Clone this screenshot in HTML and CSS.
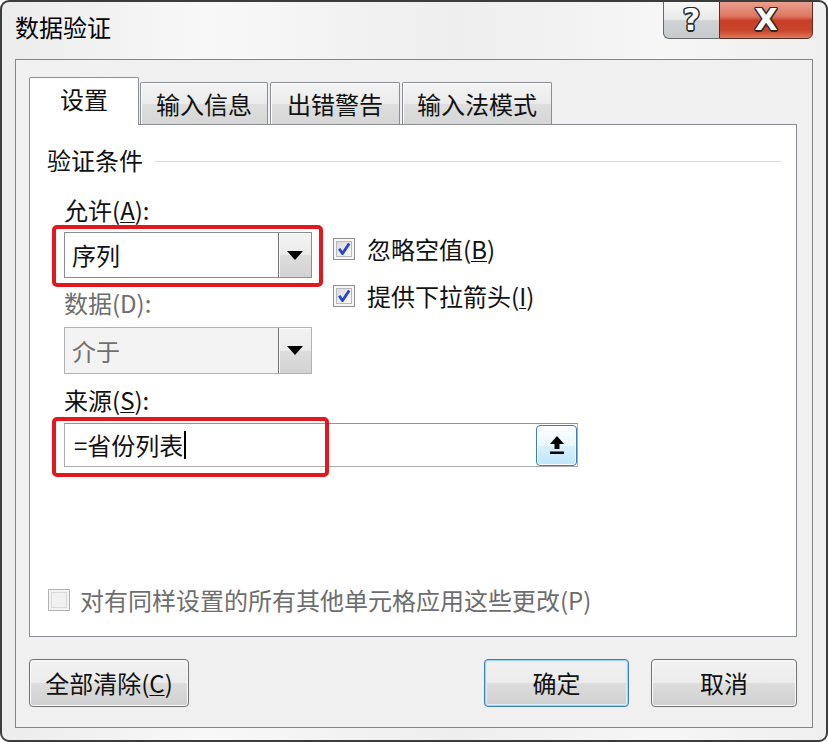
FILE: index.html
```html
<!DOCTYPE html>
<html lang="zh-CN">
<head>
<meta charset="utf-8">
<title>数据验证</title>
<link rel="stylesheet" href="styles.css">
</head>
<body>
<div class="window">
  <div class="titlebar">
    <div class="title">数据验证</div>
    <div class="caption-buttons">
      <div class="cap-btn help">?</div>
      <div class="cap-btn close">X</div>
    </div>
  </div>
  <div class="client">
    <div class="tabs">
      <div class="tab active">设置</div>
      <div class="tab">输入信息</div>
      <div class="tab">出错警告</div>
      <div class="tab">输入法模式</div>
    </div>
    <div class="panel">
      <div class="group-head">
        <span class="group-title">验证条件</span>
        <div class="group-line"></div>
      </div>
      <div class="group-body">
        <div class="top-row">
          <div class="left-col">
            <div class="label">允许(<u>A</u>):</div>
            <div class="combo">
              <div class="combo-text">序列</div>
              <div class="combo-btn"><svg width="16" height="9" viewBox="0 0 16 9"><path d="M0 0 H16 L8 9 Z" fill="#000"/></svg></div>
            </div>
            <div class="label label-gap disabled">数据(D):</div>
            <div class="combo combo-disabled">
              <div class="combo-text">介于</div>
              <div class="combo-btn"><svg width="16" height="9" viewBox="0 0 16 9"><path d="M0 0 H16 L8 9 Z" fill="#000"/></svg></div>
            </div>
          </div>
          <div class="right-col">
            <div class="check">
              <svg class="box" width="22" height="22" viewBox="0 0 22 22">
                <defs><linearGradient id="cbg" x1="0" y1="0" x2="1" y2="1"><stop offset="0" stop-color="#d6d8da"/><stop offset="1" stop-color="#fbfbfb"/></linearGradient></defs>
                <rect x="0.5" y="0.5" width="21" height="21" fill="#f6f6f6" stroke="#8f8f8f"/>
                <rect x="3.5" y="3.5" width="15" height="15" fill="url(#cbg)" stroke="#b9b9b9"/>
                <path d="M6.2 10.8 L9.6 15.6 L16.2 5.4" fill="none" stroke="#2844c8" stroke-width="2.8" stroke-linejoin="round"/>
              </svg>
              <span>忽略空值(<u>B</u>)</span>
            </div>
            <div class="check">
              <svg class="box" width="22" height="22" viewBox="0 0 22 22">
                <rect x="0.5" y="0.5" width="21" height="21" fill="#f6f6f6" stroke="#8f8f8f"/>
                <rect x="3.5" y="3.5" width="15" height="15" fill="url(#cbg)" stroke="#b9b9b9"/>
                <path d="M6.2 10.8 L9.6 15.6 L16.2 5.4" fill="none" stroke="#2844c8" stroke-width="2.8" stroke-linejoin="round"/>
              </svg>
              <span>提供下拉箭头(<u>I</u>)</span>
            </div>
          </div>
        </div>
        <div class="label label-src">来源(<u>S</u>):</div>
        <div class="source">
          <div class="source-text">=省份列表<span class="caret"></span></div>
          <div class="ref-btn">
            <svg width="18" height="20" viewBox="0 0 18 20">
              <path d="M9 1 L16 9 H11.5 V14 H6.5 V9 H2 Z" fill="#000"/>
              <rect x="2" y="16.5" width="14" height="2.5" fill="#000"/>
            </svg>
          </div>
        </div>
      </div>
      <div class="check apply-all">
        <svg class="box" width="22" height="22" viewBox="0 0 22 22">
          <rect x="0.5" y="0.5" width="21" height="21" fill="#f4f4f4" stroke="#b1b1b1"/>
          <rect x="3.5" y="3.5" width="15" height="15" fill="#f1f1f1" stroke="#dadada"/>
        </svg>
        <span>对有同样设置的所有其他单元格应用这些更改(P)</span>
      </div>
      <div class="mark mark-allow"></div>
      <div class="mark mark-source"></div>
    </div>
    <div class="footer">
      <div class="btn btn-clear">全部清除(<u>C</u>)</div>
      <div class="btn btn-ok">确定</div>
      <div class="btn btn-cancel">取消</div>
    </div>
  </div>
</div>
</body>
</html>
```
FILE: styles.css
```css
* { box-sizing: border-box; }
html, body { margin: 0; padding: 0; }
body {
  width: 828px;
  height: 742px;
  background: #ffffff;
  font-family: "Noto Sans CJK SC", "Noto Sans", sans-serif;
  font-size: 24px;
  color: #111;
}
u { text-decoration: underline; text-underline-offset: 2px; text-decoration-thickness: 1px; }

.window {
  width: 828px;
  height: 742px;
  border: 2px solid #3c3c3c;
  border-radius: 9px;
  background: linear-gradient(to right, #ececec 0%, #f8f8f8 25%, #eeeeee 55%, #f6f6f6 80%, #efefef 100%);
  display: flex;
  flex-direction: column;
  overflow: hidden;
}

.titlebar {
  height: 57px;
  display: flex;
  padding-left: 13px;
}
.title {
  padding-top: 10px;
  line-height: 30px;
  font-size: 24px;
  color: #000;
}
.caption-buttons {
  margin-left: auto;
  margin-right: 13px;
  margin-top: -1px;
  display: flex;
  align-self: flex-start;
}
.cap-btn {
  height: 38px;
  display: flex;
  align-items: center;
  justify-content: center;
  color: #fff;
  font-family: "DejaVu Sans", sans-serif;
  font-weight: bold;
  line-height: 1;
  text-shadow: 1.5px 0 0 #2a2a2a, -1.5px 0 0 #2a2a2a, 0 1.5px 0 #2a2a2a, 0 -1.5px 0 #2a2a2a, 1px 1px 0 #2a2a2a, -1px -1px 0 #2a2a2a, 1px -1px 0 #2a2a2a, -1px 1px 0 #2a2a2a;
}
.help {
  width: 56px;
  font-size: 30px;
  border: 1px solid #6a6a6a;
  border-right: none;
  border-radius: 0 0 0 6px;
  background: linear-gradient(#f7f7f7 0%, #e9e9e9 48%, #cfd3d6 52%, #c6cbce 100%);
}
.close {
  width: 94px;
  font-size: 30px;
  border: 1px solid #5b2c22;
  border-radius: 0 0 6px 0;
  background: linear-gradient(#eaa08f 0%, #de7560 40%, #c83e26 52%, #c9452c 80%, #df7a5e 100%);
}

.client {
  margin: 0 13px 12px 13px;
  height: 669px;
  border: 1px solid #858585;
  background: #f0f0f0;
  padding: 17px 15px 0 13px;
  display: flex;
  flex-direction: column;
}

.tabs {
  height: 47px;
  display: flex;
  align-items: flex-end;
  gap: 1px;
  position: relative;
  z-index: 2;
}
.tab {
  height: 42px;
  border: 1px solid #8b8e94;
  border-bottom: none;
  border-radius: 2px 2px 0 0;
  background: linear-gradient(#f4f4f4 0%, #ebebeb 50%, #dedede 52%, #d6d6d6 100%);
  box-shadow: inset 1px 1px 0 #fcfcfc;
  display: flex;
  align-items: center;
  justify-content: center;
  line-height: 30px;
  color: #111;
}
.tab:nth-child(2) { width: 128px; }
.tab:nth-child(3) { width: 130px; margin-left: 1px; }
.tab:nth-child(4) { width: 150px; margin-left: 1px; }
.tab.active {
  width: 110px;
  height: 48px;
  margin-bottom: -1px;
  background: #ffffff;
  box-shadow: none;
  padding-bottom: 6px;
}

.panel {
  position: relative;
  height: 513px;
  border: 1px solid #8b8e94;
  background: #ffffff;
  padding: 20px 15px 0 17px;
  display: flex;
  flex-direction: column;
}

.group-head {
  display: flex;
  align-items: center;
  height: 30px;
}
.group-title { line-height: 30px; color: #111; }
.group-line {
  flex: 1;
  height: 1px;
  margin-left: 12px;
  margin-top: 2px;
  background: #d5dfe5;
}

.group-body {
  margin-left: 17px;
  margin-top: 20px;
}
.top-row {
  display: flex;
  gap: 21px;
}
.left-col { width: 248px; display: flex; flex-direction: column; }
.label { line-height: 30px; height: 30px; color: #111; }
.label.disabled { color: #6d6d6d; }

.combo {
  margin-top: 7px;
  height: 46px;
  border: 1px solid #8a8d92;
  background: #ffffff;
  display: flex;
}
.combo-text {
  flex: 1;
  padding-left: 7px;
  line-height: 44px;
  color: #111;
}
.combo-btn {
  width: 33px;
  border-left: 1px solid #6f6f6f;
  background: linear-gradient(#f3f3f3 0%, #ebebeb 50%, #dddddd 51%, #d2d2d2 100%);
  display: flex;
  align-items: center;
  justify-content: center;
  box-shadow: inset 1px 1px 0 #fafafa;
}
.label-gap { margin-top: 10px; }
.combo-disabled {
  margin-top: 9px;
  height: 47px;
  background: #f3f3f3;
  border-color: #adb2b5;
}
.combo-disabled .combo-text { color: #707070; line-height: 45px; }

.right-col {
  padding-top: 39px;
  display: flex;
  flex-direction: column;
  gap: 17px;
}
.check {
  display: flex;
  align-items: center;
  height: 30px;
  gap: 12px;
  line-height: 30px;
  color: #111;
}
.check .box { flex: none; }

.label-src { margin-top: 11px; }
.source {
  margin-top: 8px;
  width: 514px;
  height: 44px;
  border: 1px solid #abadb3;
  border-top-color: #8e939b;
  background: #fff;
  display: flex;
  align-items: center;
}
.source-text {
  flex: 1;
  padding-left: 9px;
  line-height: 30px;
  color: #111;
  display: flex;
  align-items: center;
}
.caret {
  display: inline-block;
  width: 1.5px;
  height: 28px;
  background: #000;
  margin-left: 1px;
}
.ref-btn {
  width: 41px;
  height: 41px;
  border: 1px solid #3c7fb1;
  border-radius: 4px;
  background: linear-gradient(#fdfeff 0%, #eaf6fd 50%, #d9f0fc 51%, #bee6fd 100%);
  box-shadow: inset 0 0 0 1px #ffffff;
  display: flex;
  align-items: center;
  justify-content: center;
}

.apply-all {
  margin-top: auto;
  margin-bottom: 21px;
  margin-left: 1px;
  gap: 10px;
}
.apply-all span { color: #6d6d6d; }

.mark {
  position: absolute;
  border: 4px solid #e3171e;
  border-radius: 5px;
  z-index: 3;
}
.mark-allow { left: 22px; top: 100px; width: 271px; height: 62px; }
.mark-source { left: 22px; top: 292px; width: 277px; height: 60px; }

.footer {
  margin-top: 22px;
  display: flex;
  align-items: center;
}
.btn {
  height: 48px;
  border: 1px solid #707070;
  border-radius: 4px;
  background: linear-gradient(#f2f2f2 0%, #ebebeb 50%, #dddddd 51%, #cfcfcf 100%);
  box-shadow: inset 0 0 0 1px #fbfbfb;
  display: flex;
  align-items: center;
  justify-content: center;
  color: #111;
  line-height: 30px;
}
.btn-clear { width: 160px; }
.btn-ok {
  width: 145px;
  margin-left: auto;
  border-color: #3c7fb1;
  box-shadow: inset 0 0 0 1px #9fd6f5, inset 0 0 0 2px #d8effb;
}
.btn-cancel { width: 146px; margin-left: 22px; }
```
